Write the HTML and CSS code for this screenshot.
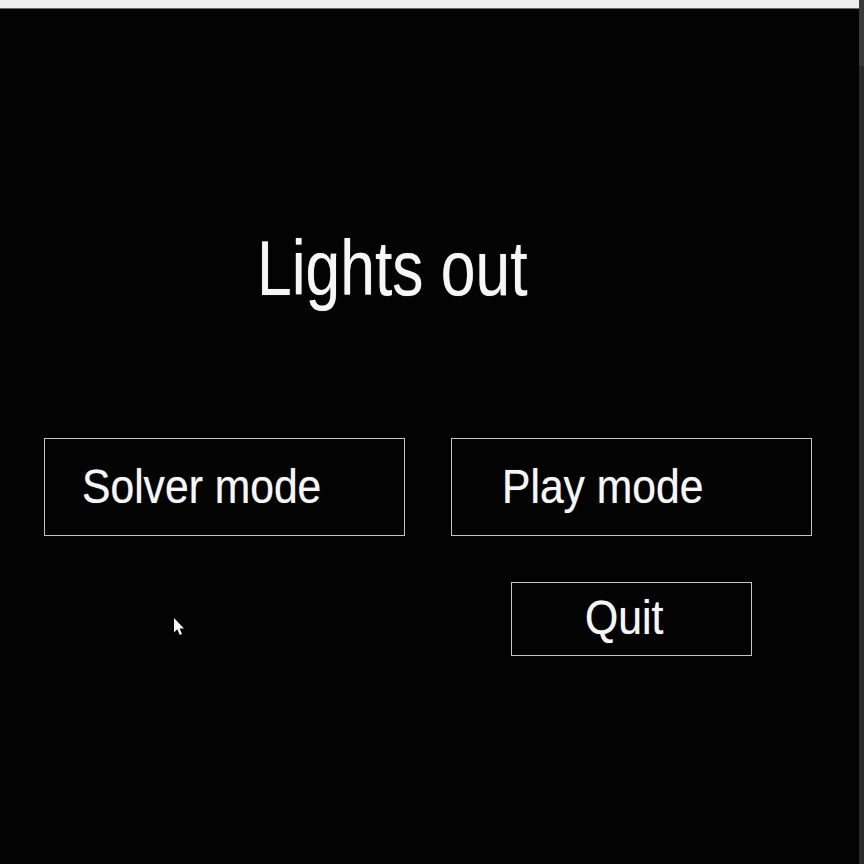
FILE: index.html
```html
<!DOCTYPE html>
<html>
<head>
<meta charset="utf-8">
<link rel="stylesheet" href="styles.css">
</head>
<body>
<div class="screen">
  <div class="viewport">
    <div class="topbar"></div>
    <main class="menu">
      <h1 class="title"><span class="txt">Lights out</span></h1>
      <div class="row">
        <div class="btn btn-solver"><span class="txt">Solver mode</span></div>
        <div class="btn btn-play"><span class="txt">Play mode</span></div>
      </div>
      <div class="row row-quit">
        <div class="btn btn-quit"><span class="txt">Quit</span></div>
      </div>
      <svg class="cursor" width="12" height="20" viewBox="0 0 12 20"><path d="M1 1 L1 15.5 L4.3 12.3 L6.8 18 L9 17 L6.6 11.5 L11 11.5 Z" fill="#f4f4f4"/></svg>
    </main>
  </div>
  <div class="scrollbar"><div class="thumb"></div></div>
</div>
</body>
</html>
```
FILE: styles.css
```css
html, body {
  margin: 0;
  padding: 0;
  background: #030303;
  height: 100%;
  overflow: hidden;
}
.screen {
  display: flex;
  width: 864px;
  height: 864px;
}
.viewport {
  flex: 1;
  display: flex;
  flex-direction: column;
}
.topbar {
  height: 9px;
  background: #eceded;
  border-bottom: 1px solid #6a6a6a;
  box-sizing: border-box;
}
.menu {
  position: relative;
  padding-left: 44px;
  font-family: "Liberation Sans", Arial, sans-serif;
  color: #f6f6f6;
  text-shadow: 0 0 1px rgba(255, 255, 255, 0.6);
}
.txt {
  display: inline-block;
  transform-origin: 0 50%;
  white-space: nowrap;
}
.title {
  margin: 221px 0 0 213px;
  font-size: 77px;
  font-weight: normal;
  line-height: 77px;
  height: 77px;
}
.title .txt {
  transform: scaleX(0.81);
}
.row {
  display: flex;
  gap: 46px;
}
.title + .row {
  margin-top: 131px;
}
.row-quit {
  margin-top: 46px;
  padding-left: 467px;
}
.btn {
  box-sizing: border-box;
  border: 1px solid #c4c4c4;
  width: 361px;
  height: 98px;
  font-size: 49px;
  line-height: 94px;
}
.btn .txt {
  transform: scaleX(0.87);
}
.btn-solver {
  padding-left: 37px;
}
.btn-play {
  padding-left: 50px;
}
.btn-quit {
  width: 241px;
  height: 74px;
  font-size: 48px;
  line-height: 69px;
  padding-left: 73px;
}
.btn-quit .txt {
  transform: scaleX(0.89);
}
.cursor {
  position: absolute;
  left: 173px;
  top: 608px;
}
.scrollbar {
  width: 5px;
  background: #2a2a2a;
  display: flex;
  flex-direction: column;
}
.thumb {
  height: 66px;
  background: #3a3a3a;
}
```
